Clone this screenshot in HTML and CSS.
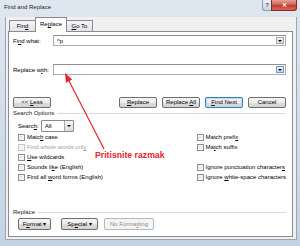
FILE: index.html
```html
<!DOCTYPE html>
<html lang="en">
<head>
    <meta charset="UTF-8">
    <title>Find and Replace</title>
    <link rel="stylesheet" href="styles.css">
</head>
<body>

<!-- Barra de título -->
<div class="titlebar">
    <span class="title">Find and Replace</span>
    <div class="controls">
        <span class="btn-help">?</span>
        <span class="btn-close">&#x2715;</span>
    </div>
</div>

<div class="client">

    <!-- Separadores -->
    <div class="tabs">
        <span class="tab tab-find">Fin<u>d</u></span>
        <span class="tab tab-active">Re<u>p</u>lace</span>
        <span class="tab tab-goto"><u>G</u>o To</span>
    </div>

    <div class="panel">

        <div class="field-row first">
            <label class="field-label">Fi<u>n</u>d what:</label>
            <div class="combo">
                <span class="combo-text">^p</span>
                <span class="combo-arrow"></span>
            </div>
        </div>

        <div class="field-row second">
            <label class="field-label">Replace w<u>i</u>th:</label>
            <div class="combo">
                <span class="combo-text"></span>
                <span class="combo-arrow hot"></span>
            </div>
        </div>

        <div class="button-row">
            <span class="btn">&lt;&lt; <u>L</u>ess</span>
            <div class="button-group">
                <span class="btn"><u>R</u>eplace</span>
                <span class="btn">Replace <u>A</u>ll</span>
                <span class="btn btn-default"><u>F</u>ind Next</span>
                <span class="btn">Cancel</span>
            </div>
        </div>

        <div class="group-head">
            <span>Search Options</span>
            <span class="group-line"></span>
        </div>

        <div class="search-row">
            <span class="search-label">Searc<u>h</u>:</span>
            <div class="select">
                <span class="select-text">All</span>
                <span class="select-arrow"></span>
            </div>
        </div>

        <div class="options">
            <div class="option-col">
                <div class="option"><span class="check"></span><span>Matc<u>h</u> case</span></div>
                <div class="option disabled"><span class="check"></span><span>Find whole words onl<u>y</u></span></div>
                <div class="option"><span class="check"></span><span><u>U</u>se wildcards</span></div>
                <div class="option"><span class="check"></span><span>Sounds li<u>k</u>e (English)</span></div>
                <div class="option"><span class="check"></span><span>Find all <u>w</u>ord forms (English)</span></div>
            </div>
            <div class="option-col right">
                <div class="option"><span class="check"></span><span>Match prefi<u>x</u></span></div>
                <div class="option"><span class="check"></span><span>Ma<u>t</u>ch suffix</span></div>
                <div class="option"></div>
                <div class="option"><span class="check"></span><span>Ignore punctuation character<u>s</u></span></div>
                <div class="option"><span class="check"></span><span>Ignore <u>w</u>hite-space characters</span></div>
            </div>
        </div>

        <div class="group-head replace-head">
            <span>Replace</span>
            <span class="group-line"></span>
        </div>

        <div class="button-row bottom">
            <span class="btn btn-format">F<u>o</u>rmat &#9662;</span>
            <span class="btn btn-special">Sp<u>e</u>cial &#9662;</span>
            <span class="btn btn-disabled">No Forma<u>t</u>ting</span>
        </div>

    </div>
</div>

<!-- Anotação por cima do diálogo -->
<svg class="note-arrow" width="300" height="246" viewBox="0 0 300 246">
    <line x1="104" y1="149" x2="68" y2="79" stroke="#e8232b" stroke-width="1.2"/>
    <polygon points="65,73 72.2,79.6 66,82.8" fill="#e8232b"/>
</svg>
<span class="note-text">Pritisnite razmak</span>

</body>
</html>
```

FILE: styles.css
```css
* {
    box-sizing: border-box;
}

body {
    margin: 0;
    width: 300px;
    height: 246px;
    overflow: hidden;
    position: relative;
    font-family: "Liberation Sans", Arial, sans-serif;
    font-size: 6px;
    color: #000;
    background: linear-gradient(#dfe7f0, #cfdbe8 60%, #c4d3e4);
}

u {
    text-decoration-thickness: 1px;
    text-underline-offset: 1px;
}

/* Barra de título */
.titlebar {
    height: 17px;
    display: flex;
    justify-content: space-between;
    align-items: flex-start;
    padding-left: 4px;
}

.title {
    line-height: 14px;
    color: #1e1e1e;
}

.controls {
    display: flex;
    margin-right: 3px;
}

.btn-help {
    width: 9px;
    height: 11px;
    line-height: 10px;
    text-align: center;
    font-size: 6px;
    font-weight: bold;
    color: #4a5a6c;
    background: linear-gradient(#e9eff6, #c8d5e3);
    border: 1px solid #8b9cb0;
    border-top: none;
    border-right: none;
    border-radius: 0 0 0 3px;
}

.btn-close {
    width: 26px;
    height: 11px;
    line-height: 10px;
    text-align: center;
    font-size: 6px;
    font-weight: bold;
    color: #fff;
    background: linear-gradient(#e3a197, #cc5c4c 50%, #c0392b 51%, #d86a57);
    border: 1px solid #7f2d25;
    border-top: none;
    border-radius: 0 0 3px 0;
}

/* Área interna */
.client {
    margin: 0 3px 0 5px;
    height: 223px;
    padding: 0 3px 0 2px;
    background: #f0f0f0;
    border: 1px solid #9aa5b2;
    border-top: none;
}

.tabs {
    display: flex;
    align-items: flex-end;
    height: 14px;
    padding-left: 1px;
}

.tab {
    height: 11px;
    line-height: 10px;
    text-align: center;
    white-space: nowrap;
    border: 1px solid #898c95;
    border-bottom: none;
    background: linear-gradient(#f5f5f5, #e3e3e3);
    margin-right: -1px;
    position: relative;
}

.tab-find {
    width: 27px;
}

.tab-active {
    width: 32px;
    height: 15px;
    margin-bottom: -1px;
    line-height: 12px;
    background: #fff;
    z-index: 1;
}

.tab-goto {
    width: 27px;
}

.panel {
    height: 206px;
    border: 1px solid #898c95;
    background: #fff;
    padding: 0 6px 0 4px;
}

/* Campos */
.field-row {
    display: flex;
    align-items: center;
    height: 11px;
}

.field-row.first {
    margin-top: 3px;
}

.field-row.second {
    margin-top: 18px;
}

.field-label {
    width: 40px;
}

.combo {
    flex: 1;
    height: 11px;
    border: 1px solid #abadb3;
    border-top-color: #8e9199;
    display: flex;
    align-items: center;
    padding: 0 1px 0 3px;
}

.combo-text {
    flex: 1;
}

.combo-arrow {
    width: 8px;
    height: 7px;
    border: 1px solid #a3a6ad;
    background: linear-gradient(#f4f4f4, #dcdcdc);
    position: relative;
}

.combo-arrow.hot {
    border-color: #6d9bc6;
    background: linear-gradient(#e6f3fc, #bcdcf5);
}

.combo-arrow::after,
.select-arrow::after {
    content: "";
    position: absolute;
    left: 50%;
    top: 50%;
    margin: -1px 0 0 -2px;
    border-left: 2px solid transparent;
    border-right: 2px solid transparent;
    border-top: 2px solid #000;
}

/* Botões */
.button-row {
    display: flex;
    align-items: center;
    height: 11px;
    margin-top: 22px;
}

.button-group {
    display: flex;
    gap: 5px;
    margin-left: auto;
}

.btn {
    width: 38px;
    height: 11px;
    line-height: 9px;
    text-align: center;
    border: 1px solid #707070;
    border-radius: 2px;
    background: linear-gradient(#f4f4f4, #ececec 50%, #dedede 51%, #d2d2d2);
    white-space: nowrap;
}

.btn-default {
    border-color: #3c7fb1;
    box-shadow: inset 0 0 0 1px #b5dcf3;
}

.button-row.bottom {
    margin-top: 2px;
    height: 12px;
    padding-left: 5px;
    gap: 6px;
}

.bottom .btn {
    height: 12px;
    line-height: 10px;
}

.btn-format {
    width: 33px;
    margin-right: 4px;
}

.btn-special {
    width: 37px;
}

.btn-disabled {
    width: 50px;
    color: #8a8a8a;
    border-color: #b6b9bc;
    background: #f4f4f4;
}

/* Grupos */
.group-head {
    display: flex;
    align-items: center;
    height: 8px;
    margin-top: 1px;
    color: #1c1c1c;
}

.group-line {
    flex: 1;
    border-top: 1px solid #d5dde3;
    margin-left: 3px;
}

.replace-head {
    margin-top: 26px;
}

.search-row {
    display: flex;
    align-items: center;
    height: 12px;
    margin-top: 3px;
    padding-left: 5px;
}

.search-label {
    width: 23px;
}

.select {
    width: 33px;
    height: 12px;
    border: 1px solid #8a8a8a;
    border-radius: 1px;
    display: flex;
    align-items: stretch;
}

.select-text {
    flex: 1;
    line-height: 10px;
    padding-left: 3px;
}

.select-arrow {
    width: 9px;
    border-left: 1px solid #a3a6ad;
    background: linear-gradient(#f4f4f4, #dcdcdc);
    position: relative;
}

/* Opções */
.options {
    display: flex;
    padding-left: 5px;
}

.option-col {
    width: 181px;
}

.option-col.right {
    width: auto;
}

.option {
    display: flex;
    align-items: center;
    height: 10px;
    white-space: nowrap;
}

.check {
    width: 7px;
    height: 7px;
    margin-right: 2px;
    border: 1px solid #8f8f8f;
    background: linear-gradient(135deg, #dcdcdc, #fbfbfb);
    box-shadow: inset 0 0 0 1px #f4f4f4;
}

.option.disabled {
    color: #a0a0a0;
}

.option.disabled .check {
    border-color: #c5c5c5;
    background: #f4f4f4;
}

/* Anotação vermelha */
.note-arrow {
    position: absolute;
    left: 0;
    top: 0;
    pointer-events: none;
}

.note-text {
    position: absolute;
    left: 95px;
    top: 150px;
    font-size: 8.7px;
    font-weight: bold;
    color: #e8232b;
    white-space: nowrap;
}
```
